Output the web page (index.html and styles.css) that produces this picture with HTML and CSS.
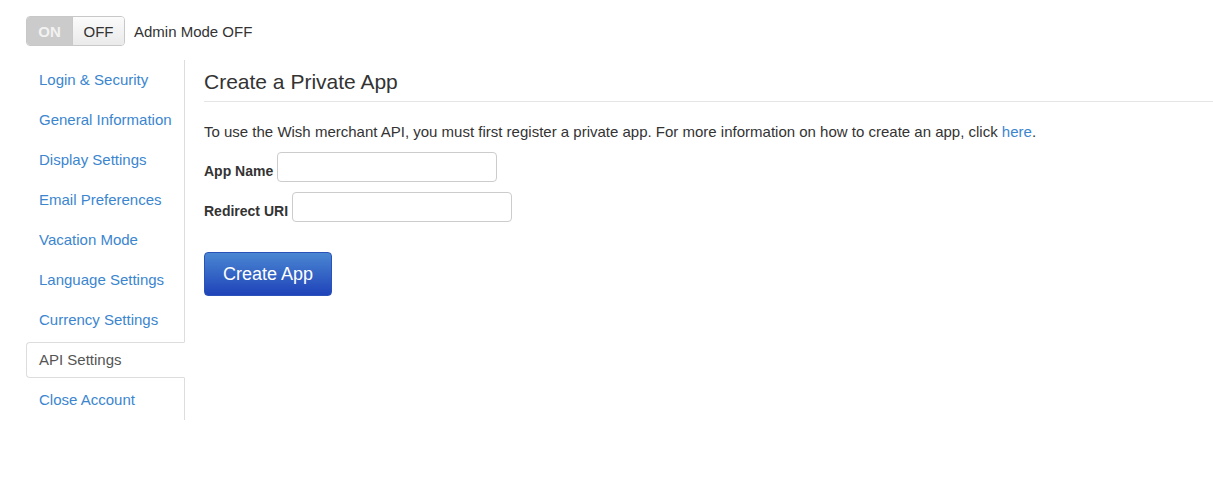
FILE: index.html
```html
<!DOCTYPE html>
<html>
<head>
  <title>API Settings</title>
  <link rel="stylesheet" href="styles.css">
</head>
<body>
  <div class="page">
    <div class="admin-bar">
      <div class="toggle">
        <span class="toggle-on">ON</span>
        <span class="toggle-off">OFF</span>
      </div>
      <span class="admin-label">Admin Mode OFF</span>
    </div>

    <div class="settings">
      <ul class="side-nav">
        <li><a href="#">Login &amp; Security</a></li>
        <li><a href="#">General Information</a></li>
        <li><a href="#">Display Settings</a></li>
        <li><a href="#">Email Preferences</a></li>
        <li><a href="#">Vacation Mode</a></li>
        <li><a href="#">Language Settings</a></li>
        <li><a href="#">Currency Settings</a></li>
        <li class="active"><a href="#">API Settings</a></li>
        <li><a href="#">Close Account</a></li>
      </ul>

      <div class="content">
        <h2>Create a Private App</h2>
        <p class="intro">To use the Wish merchant API, you must first register a private app. For more information on how to create an app, click <a href="#">here</a>.</p>
        <form>
          <div class="field">
            <label for="appName">App Name</label>
            <input type="text" id="appName">
          </div>
          <div class="field">
            <label for="redirectUri">Redirect URI</label>
            <input type="text" id="redirectUri">
          </div>
          <button type="button" class="btn-create">Create App</button>
        </form>
      </div>
    </div>
  </div>
</body>
</html>
```

FILE: styles.css
```css
body {
  margin: 0;
  background-color: #fff;
  color: #333;
  font-family: "Liberation Sans", Arial, sans-serif;
  font-size: 15px;
}
.page {
  padding: 16px 0 0 26px;
}
a {
  color: #3b86cf;
  text-decoration: none;
}

/* admin toggle */
.admin-bar {
  display: flex;
  align-items: center;
  height: 30px;
}
.toggle {
  display: flex;
  height: 30px;
  box-sizing: border-box;
  border: 1px solid #c8c8c8;
  border-radius: 4px;
  overflow: hidden;
}
.toggle span {
  display: flex;
  align-items: center;
  justify-content: center;
  font-size: 15px;
}
.toggle-on {
  width: 45px;
  background-color: #cbcbcb;
  color: #f2f2f2;
  font-weight: 700;
}
.toggle-off {
  width: 51px;
  border-left: 1px solid #c8c8c8;
  background: linear-gradient(#fbfbfb, #eaeaea);
  color: #333;
}
.admin-label {
  margin-left: 9px;
}

/* settings layout */
.settings {
  display: flex;
  margin-top: 14px;
}
.side-nav {
  list-style: none;
  margin: 0;
  padding: 0;
  width: 158px;
  flex-shrink: 0;
  border-right: 1px solid #ddd;
}
.side-nav li {
  height: 40px;
  display: flex;
  align-items: center;
}
.side-nav a {
  display: block;
  padding-left: 13px;
  line-height: 20px;
}
.side-nav li.active {
  height: 36px;
  margin: 2px -1px 2px 0;
  background-color: #fff;
  border: 1px solid #ddd;
  border-right-color: #fff;
  border-radius: 4px 0 0 4px;
  box-sizing: border-box;
}
.side-nav li.active a {
  color: #555;
  padding-left: 12px;
}

.content {
  flex: 1;
  padding-left: 19px;
}
.content h2 {
  margin: 10px 0 0;
  padding-bottom: 7px;
  border-bottom: 1px solid #e5e5e5;
  font-size: 21px;
  font-weight: 400;
  line-height: 24px;
  color: #333;
}
.intro {
  margin: 20px 0 10px;
  line-height: 20px;
}
.field {
  display: flex;
  align-items: center;
  height: 30px;
  margin-bottom: 10px;
}
.field label {
  font-size: 14px;
  font-weight: 700;
  margin-top: 8px;
  margin-right: 4px;
}
.field input {
  width: 220px;
  height: 30px;
  box-sizing: border-box;
  border: 1px solid #ccc;
  border-radius: 4px;
  padding: 4px 6px;
  font-family: "Liberation Sans", Arial, sans-serif;
  font-size: 14px;
}
.btn-create {
  margin-top: 20px;
  width: 128px;
  height: 44px;
  border: 1px solid #2a52b8;
  border-radius: 4px;
  background: linear-gradient(#4a87d2, #1f43b9);
  color: #fff;
  font-family: "Liberation Sans", Arial, sans-serif;
  font-size: 18px;
  cursor: pointer;
}
```
